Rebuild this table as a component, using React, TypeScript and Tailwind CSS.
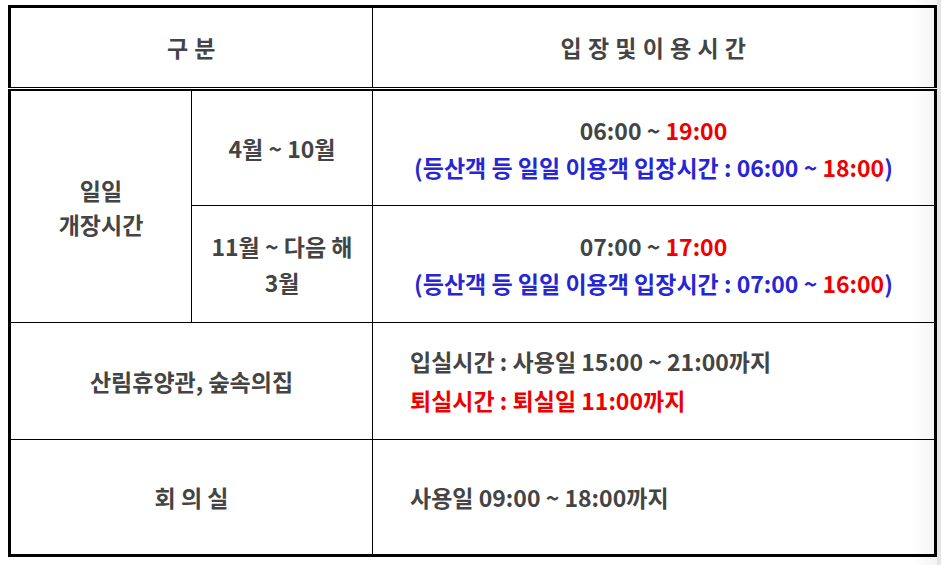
import React from "react";

const font = { fontFamily: '"Noto Sans CJK KR", "Noto Sans", sans-serif' };

export default function App() {
  return (
    <div
      className="relative w-[941px] h-[565px] bg-white pt-[5px] pl-[8px] text-[#444] font-bold text-[23px] overflow-hidden"
      style={font}
    >
      {/* header */}
      <div className="flex w-[929px] h-[83px] border-[3px] border-b border-black tracking-[0.5px]">
        <div className="w-[362px] border-r border-black flex items-center justify-center">
          구 분
        </div>
        <div className="flex-1 flex items-center justify-center">입 장 및 이 용 시 간</div>
      </div>
      {/* body */}
      <div className="mt-px w-[929px] h-[468px] border-[3px] border-t-2 border-black grid grid-cols-[181px_181px_1fr] grid-rows-[115px_117px_117px_114px]">
        <div className="row-span-2 border-r border-b border-black flex flex-col items-center justify-center leading-[34px]">
          <span>일일</span>
          <span>개장시간</span>
        </div>
        <div className="border-r border-b border-black flex items-center justify-center">4월 ~ 10월</div>
        <div className="border-b border-black flex flex-col items-center justify-center leading-[37px] pt-[2px]">
          <span>
            06:00 ~ <span className="text-[#ee0000]">19:00</span>
          </span>
          <span className="text-[#2626d4]">
            (등산객 등 일일 이용객 입장시간 : 06:00 ~ <span className="text-[#ee0000]">18:00</span>)
          </span>
        </div>
        <div className="border-r border-b border-black flex flex-col items-center justify-center leading-[36px]">
          <span>11월 ~ 다음 해</span>
          <span>3월</span>
        </div>
        <div className="border-b border-black flex flex-col items-center justify-center leading-[37px] pt-[2px]">
          <span>
            07:00 ~ <span className="text-[#ee0000]">17:00</span>
          </span>
          <span className="text-[#2626d4]">
            (등산객 등 일일 이용객 입장시간 : 07:00 ~ <span className="text-[#ee0000]">16:00</span>)
          </span>
        </div>
        <div className="col-span-2 border-r border-b border-black flex items-center justify-center">
          산림휴양관, 숲속의집
        </div>
        <div className="border-b border-black flex flex-col justify-center pl-[37px] leading-[39px]">
          <span>입실시간 : 사용일 15:00 ~ 21:00까지</span>
          <span className="text-[#ee0000]">퇴실시간 : 퇴실일 11:00까지</span>
        </div>
        <div className="col-span-2 border-r border-black flex items-center justify-center">회 의 실</div>
        <div className="flex items-center pl-[37px]">사용일 09:00 ~ 18:00까지</div>
      </div>
      <div className="pointer-events-none absolute top-0 right-0 h-full w-[30px] bg-gradient-to-r from-transparent to-[rgba(0,0,0,0.05)]" />
      <div className="pointer-events-none absolute top-0 right-0 h-full w-[4px] bg-[#e6e6e6]" />
    </div>
  );
}
